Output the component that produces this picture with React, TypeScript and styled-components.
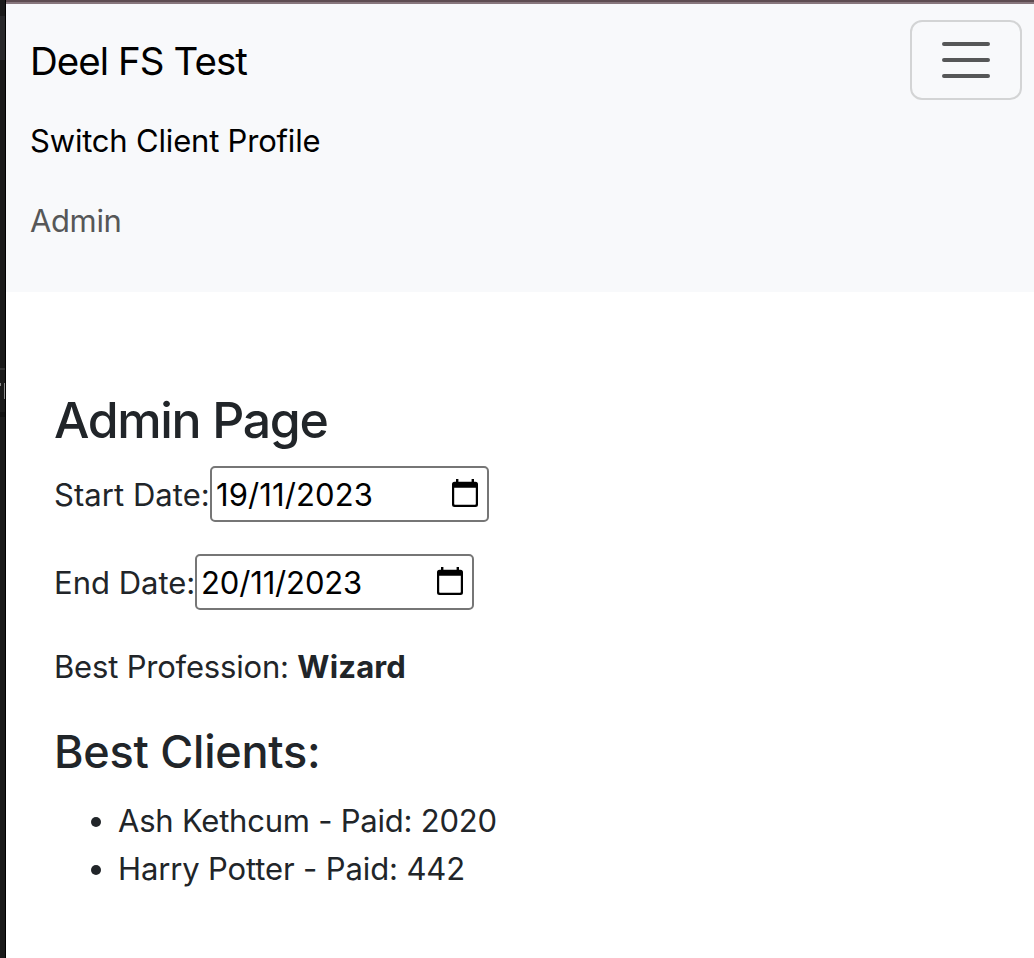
import React from 'react';
import styled, { createGlobalStyle } from 'styled-components';

const GlobalStyle = createGlobalStyle`
  *, *::before, *::after { box-sizing: border-box; }
  body {
    margin: 0;
    background: #fff;
    color: #212529;
    font: 400 31px/48px Inter, "Liberation Sans", sans-serif;
    overflow: hidden;
  }
`;

const Screen = styled.div`
  display: flex;
  height: 958px;
`;

const DesktopEdge = styled.aside`
  position: relative;
  width: 6px;
  flex: none;
  background: linear-gradient(#1b1b1b 0 16px, #28282a 16px 60px, #1a1a1a 60px 368px, #333 368px 370px, #1a1a1a 370px 412px, #111 412px 417px, #1a1a1a 417px);
  border-right: 1px solid #000;
`;

const EdgeMark = styled.span<{ $x: number; $y: number; $w: number; $h: number }>`
  position: absolute;
  left: ${p => p.$x}px;
  top: ${p => p.$y}px;
  width: ${p => p.$w}px;
  height: ${p => p.$h}px;
  background: #8a8a8a;
`;

const Page = styled.div`
  flex: 1;
  display: flex;
  flex-direction: column;
`;

const TopStrip = styled.div`
  height: 4px;
  background: linear-gradient(#5e4c51 0 2px, #88777d 2px 4px);
`;

const Navbar = styled.nav`
  display: flex;
  justify-content: space-between;
  align-items: flex-start;
  height: 288px;
  padding: 16px 12px 0 24px;
  background: #f8f9fb;
`;

const NavLinks = styled.div`
  display: flex;
  flex-direction: column;
  padding-top: 11px;
`;

const Text = styled.span<{ $spacing?: number }>`
  letter-spacing: ${p => p.$spacing ?? 0}px;
  white-space: pre;
`;

const Brand = styled(Text)`
  color: #000;
  font-size: 38.5px;
  line-height: 60px;
  margin-bottom: 26px;
`;

const NavLink = styled(Text)<{ $active?: boolean }>`
  color: ${p => (p.$active ? '#000' : '#565758')};
  margin-bottom: 32px;
`;

const Toggler = styled.button`
  display: flex;
  align-items: center;
  justify-content: center;
  width: 112px;
  height: 80px;
  padding: 0;
  border: 2px solid #d3d4d5;
  border-radius: 12px;
  background: transparent;
`;

const Content = styled.main`
  padding: 98px 48px 0;
`;

const Title = styled.h1`
  margin: 0 0 15px;
  font-size: 50px;
  font-weight: 500;
  line-height: 61px;
  letter-spacing: -1.35px;
`;

const Field = styled.div`
  display: flex;
  align-items: center;
  height: 56px;
  margin-bottom: 32px;
`;

const FieldLabel = styled(Text)<{ $width: number }>`
  width: ${p => p.$width}px;
  padding-top: 2px;
`;

const DateBox = styled.div`
  display: flex;
  align-items: center;
  justify-content: space-between;
  width: 279px;
  height: 56px;
  padding: 0 9px 0 4px;
  border: 2px solid #767676;
  border-radius: 5px;
  color: #000;

  svg { margin-bottom: 2px; }
`;

const DateValue = styled(Text)`
  padding-top: 2px;
`;

const Profession = styled.p`
  margin: 0 0 33px;
  padding-top: 1px;
`;

const Strong = styled.strong`
  font-weight: 700;
  letter-spacing: 0.16px;
`;

const Subtitle = styled.h2`
  margin: 0 0 18px;
  font-size: 45px;
  font-weight: 500;
  line-height: 55px;
  letter-spacing: -0.24px;
`;

const ClientList = styled.ul`
  margin: 0;
  padding: 0 0 0 37px;
  list-style: none;
`;

const Client = styled.li`
  display: flex;
  align-items: center;
  gap: 17px;

  &::before {
    content: '';
    width: 10px;
    height: 10px;
    margin-top: 1px;
    border-radius: 50%;
    background: #212529;
  }
`;

const MenuIcon = () => (
  <svg width="60" height="60" viewBox="0 0 60 60" stroke="#565758" strokeWidth="4" strokeLinecap="round">
    <path d="M8 14h44M8 30h44M8 46h44" />
  </svg>
);

const CalendarIcon = () => (
  <svg width="26" height="28" viewBox="0 0 26 28">
    <path
      fillRule="evenodd"
      d="M4 0h2.400v2.700h13.200V0h2.400v2.700h1.500a2.500 2.500 0 0 1 2.500 2.500v20.300a2.500 2.500 0 0 1-2.500 2.500h-21A2.500 2.500 0 0 1 0 25.500v-20.300A2.500 2.500 0 0 1 2.500 2.700H4zM2.200 8.700v16.300a.8.8 0 0 0 .8.8h20a.8.8 0 0 0 .8-.8V8.700z"
    />
  </svg>
);

interface DateFieldProps {
  label: string;
  labelWidth: number;
  labelSpacing: number;
  value: string;
  valueSpacing: number;
}

const DateField = ({ label, labelWidth, labelSpacing, value, valueSpacing }: DateFieldProps) => (
  <Field>
    <FieldLabel $width={labelWidth} $spacing={labelSpacing}>{label}</FieldLabel>
    <DateBox>
      <DateValue $spacing={valueSpacing}>{value}</DateValue>
      <CalendarIcon />
    </DateBox>
  </Field>
);

export default function App() {
  return (
    <Screen>
      <GlobalStyle />
      <DesktopEdge>
        <EdgeMark $x={0} $y={383} $w={1} $h={3} />
        <EdgeMark $x={4} $y={383} $w={1} $h={16} />
      </DesktopEdge>
      <Page>
        <TopStrip />
        <Navbar>
          <NavLinks>
            <Brand $spacing={-0.95}>Deel FS Test</Brand>
            <NavLink $active $spacing={-0.19}>Switch Client Profile</NavLink>
            <NavLink $spacing={-0.38}>Admin</NavLink>
          </NavLinks>
          <Toggler aria-label="Toggle navigation">
            <MenuIcon />
          </Toggler>
        </Navbar>
        <Content>
          <Title>Admin Page</Title>
          <DateField label="Start Date:" labelWidth={156} labelSpacing={0.05} value="19/11/2023" valueSpacing={0.1} />
          <DateField label="End Date:" labelWidth={141} labelSpacing={0} value="20/11/2023" valueSpacing={-0.15} />
          <Profession>
            <Text $spacing={-0.19}>Best Profession: </Text>
            <Strong>Wizard</Strong>
          </Profession>
          <Subtitle>Best Clients:</Subtitle>
          <ClientList>
            <Client><Text $spacing={-0.22}>Ash Kethcum - Paid: 2020</Text></Client>
            <Client><Text $spacing={-0.13}>Harry Potter - Paid: 442</Text></Client>
          </ClientList>
        </Content>
      </Page>
    </Screen>
  );
}
